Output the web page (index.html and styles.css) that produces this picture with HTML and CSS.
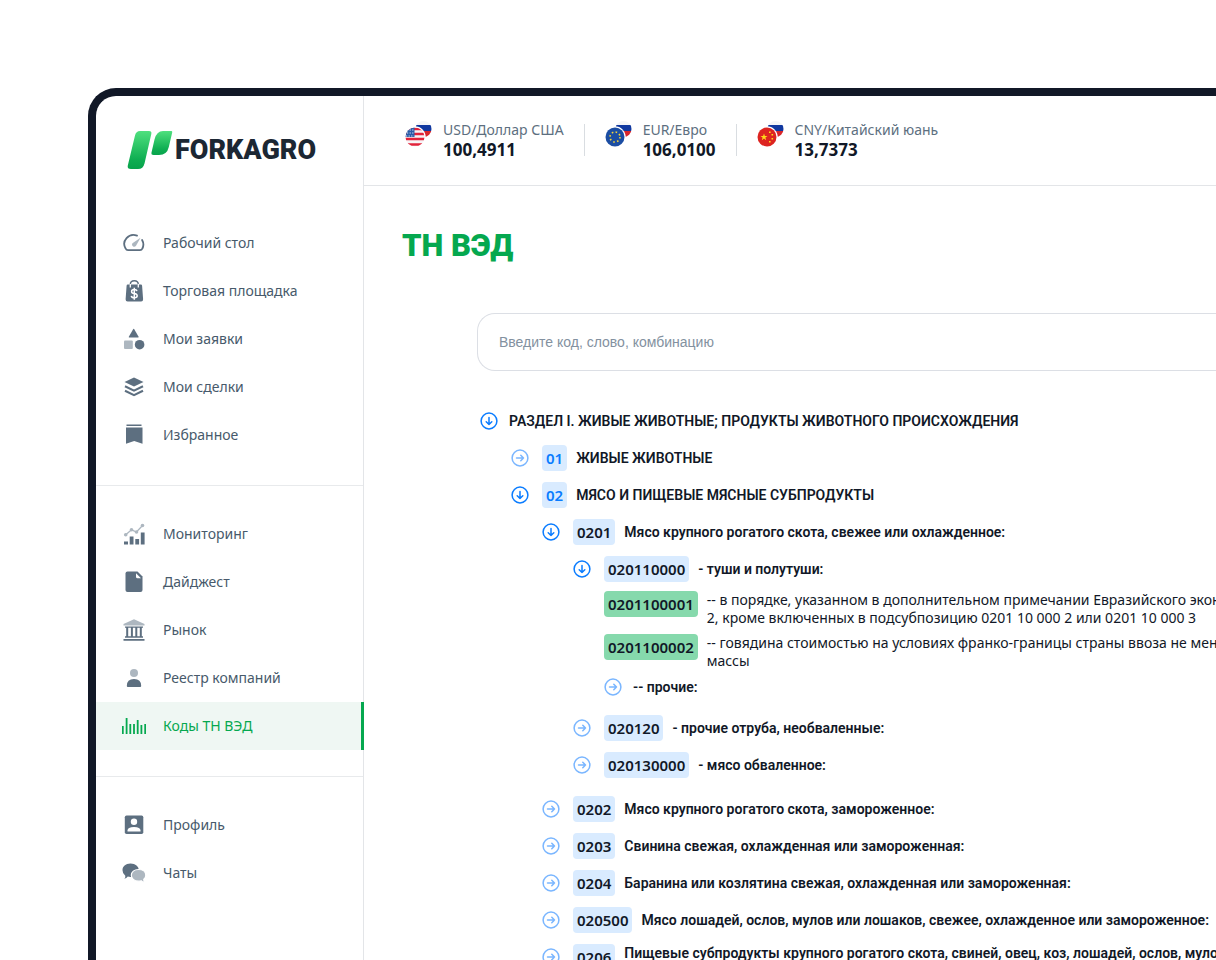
FILE: index.html
```html
<!DOCTYPE html>
<html lang="ru">
<head>
<meta charset="utf-8">
<title>ForkAgro — ТН ВЭД</title>
<link rel="stylesheet" href="styles.css">
</head>
<body>
<svg width="0" height="0" class="defs" aria-hidden="true">
  <defs>
    <linearGradient id="leaf" x1="0" y1="0" x2="0" y2="1">
      <stop offset="0" stop-color="#4fe07e"/><stop offset="0.75" stop-color="#0fae52"/><stop offset="1" stop-color="#08a34c"/>
    </linearGradient>
    <clipPath id="small-flag"><circle cx="19.500" cy="9" r="8"/></clipPath>
    <clipPath id="big-flag"><circle cx="11" cy="17" r="9.500"/></clipPath>
    <symbol id="ru" viewBox="0 0 28 28">
      <g clip-path="url(#small-flag)"><path fill="#f4f5f7" d="M11 0h17v5H11z"/><path fill="#1038a0" d="M11 5h17v6H11z"/><path fill="#d8262c" d="M11 11h17v7H11z"/></g>
      <circle cx="11" cy="17" r="10.700" fill="#fff"/>
    </symbol>
    <symbol id="down" viewBox="0 0 18 18"><g fill="none" stroke="currentColor" stroke-width="1.500" stroke-linecap="round" stroke-linejoin="round"><circle cx="9" cy="9" r="7.900"/><path d="M9 5.500v7M6.200 9.800L9 12.500l2.800-2.700"/></g></symbol>
    <symbol id="right" viewBox="0 0 18 18"><g fill="none" stroke="currentColor" stroke-width="1.500" stroke-linecap="round" stroke-linejoin="round"><circle cx="9" cy="9" r="7.900"/><path d="M5.500 9h7M9.800 6.200L12.500 9l-2.700 2.800"/></g></symbol>
  </defs>
</svg>
<div class="frame">
  <aside class="sidebar">
    <a class="logo" href="#">
      <svg width="46" height="40" viewBox="0 0 46 40" aria-hidden="true"><path fill="url(#leaf)" d="M13 1h9q3 0 2.300 3l-6.800 29.500Q16.200 39 11 39H4q-4 0-3.200-3.500L8 5.500Q9 1 13 1z"/><path fill="url(#leaf)" d="M36 1h8.500q1 0 .7 1.500l-3.400 14.500Q40 25 32 25h-5.500q-2.500 0-2-2.500l3-13Q29.500 1 36 1z"/></svg>
      <span>FORKAGRO</span>
    </a>
    <nav class="nav">
      <ul class="nav-group">
        <li><a class="nav-item" href="#"><svg class="icon" viewBox="0 0 24 24"><path d="M15 4.600A9.200 9 0 0 0 3.600 17.500q.7 1.700 2.400 1.700h12q1.700 0 2.400-1.700a9 9 0 0 0-.3-8.500" fill="none" stroke="currentColor" stroke-width="1.800" stroke-linecap="round"/><path class="pale" d="M18.500 6.800l-4.500 8a2.200 2.200 0 0 1-3.600-2.600z"/></svg>Рабочий стол</a></li>
        <li><a class="nav-item" href="#"><svg class="icon" viewBox="0 0 24 24"><path d="M8.300 8V5.500q0-3.800 4-3.800t4 3.800V8" fill="none" stroke="currentColor" stroke-width="1.400"/><path fill="currentColor" d="M5.700 5.500h13.200q1.100 0 1.200 1.300l1 13.500q.1 2.200-2 2.200H5.600q-2.100 0-2-2.200l1-13.500q.1-1.300 1.100-1.300z"/><path d="M15 12.200q-.4-1.700-2.800-1.700-2.600 0-2.600 1.900t2.700 2.100q2.900.4 2.900 2.300t-2.900 2q-2.600 0-3-2M12.300 8.700v12" fill="none" stroke="#fff" stroke-width="1.500"/><path d="M8.300 8.500V5M16.300 5v3.500" stroke="#fff" stroke-width="1.300"/></svg>Торговая площадка</a></li>
        <li><a class="nav-item" href="#"><svg class="icon" viewBox="0 0 24 24"><path fill="currentColor" d="M11.300 2q.4-.6.800 0l4.500 7.800q.3.700-.4.700h-9q-.7 0-.4-.7z"/><rect class="pale" x="2" y="13.500" width="8.800" height="8.500" rx="1"/><circle cx="17.600" cy="17.700" r="4.800" fill="currentColor"/></svg>Мои заявки</a></li>
        <li><a class="nav-item" href="#"><svg class="icon" viewBox="0 0 24 24"><path fill="currentColor" d="M12 2.500L21.500 7 12 11.500 2.500 7z"/><path d="M3 11.200l9 4.500 9-4.500M3 15.700l9 4.500 9-4.500" fill="none" stroke="currentColor" stroke-width="2.100"/></svg>Мои сделки</a></li>
        <li><a class="nav-item" href="#"><svg class="icon" viewBox="0 0 24 24"><path fill="currentColor" d="M4.500 1.500h15V3h-15zM4 4.500h16.500v16.300L12.200 18 4 20.800z"/></svg>Избранное</a></li>
      </ul>
      <ul class="nav-group">
        <li><a class="nav-item" href="#"><svg class="icon" viewBox="0 0 24 24"><path d="M4 12.500l5.500-4.700 5 2.200 6-6.500" fill="none" stroke="#adb7c0" stroke-width="1.300"/><g class="pale"><circle cx="3.700" cy="12.800" r="1.800"/><circle cx="9.500" cy="7.800" r="1.800"/><circle cx="14.500" cy="10" r="1.800"/><circle cx="20.500" cy="3.500" r="1.800"/></g><path fill="currentColor" d="M2 19.500h4v3H2zM7.700 14.500h3.800v8H7.700zM13.300 17h3.800v5.500h-3.800zM18.800 10.500h3.800v12h-3.800z"/></svg>Мониторинг</a></li>
        <li><a class="nav-item" href="#"><svg class="icon" viewBox="0 0 24 24"><path fill="currentColor" d="M5.500 1.500h10l5 5V20q0 2-2 2h-13q-2 0-2-2V3.500q0-2 2-2z"/><path fill="#fff" d="M14 3.300l5 5h-3.500q-1.500 0-1.500-1.500z"/></svg>Дайджест</a></li>
        <li><a class="nav-item" href="#"><svg class="icon" viewBox="0 0 24 24"><path class="pale" d="M12 1.200L22.500 6v1.500h-21V6z"/><path fill="currentColor" d="M3 8.500h18v1.300H3zM4.200 9h2v10h-2zM8.900 9h2v10h-2zM13.300 9h2v10h-2zM17.800 9h2v10h-2zM3 18.300h18v1.400H3zM1.500 21h21v1.700h-21z"/></svg>Рынок</a></li>
        <li><a class="nav-item" href="#"><svg class="icon" viewBox="0 0 24 24"><circle class="pale" cx="12" cy="7" r="4"/><path fill="currentColor" d="M4.800 20q0-7 7.200-7t7.200 7q0 1-1 1H5.800q-1 0-1-1z"/></svg>Реестр компаний</a></li>
        <li><a class="nav-item active" href="#" aria-current="page"><svg class="icon" viewBox="0 0 24 24"><path d="M.8 12v8M4.600 4v16M8.300 10v10M12 10v10M15.700 6v14M19.400 11v9M23.200 10v10" fill="none" stroke="currentColor" stroke-width="1.800"/></svg>Коды ТН ВЭД</a></li>
      </ul>
      <ul class="nav-group">
        <li><a class="nav-item" href="#"><svg class="icon" viewBox="0 0 24 24"><rect x="2.800" y="2.500" width="18.500" height="18.500" rx="1.700" fill="currentColor"/><circle cx="12" cy="8.700" r="3.200" fill="#fff"/><path fill="#fff" d="M5.500 18.500v-1q0-3.500 6.500-3.500t6.500 3.500v1z"/></svg>Профиль</a></li>
        <li><a class="nav-item" href="#"><svg class="icon" viewBox="0 0 24 24"><path fill="currentColor" d="M8.500 2.500c5 0 8.300 3 8.300 6.700s-3.300 6.800-8.300 6.800q-1.500 0-2.700-.4Q4.500 17.500 2.300 17.700q1.400-1.200 1-3Q.5 12.700.5 9.200c0-3.700 3-6.700 8-6.700z"/><path class="pale" stroke="#fff" stroke-width="1.200" d="M16.500 8.500c4.300 0 7.300 2.400 7.300 5.800q0 2.500-2 4-.2 1.600 1 3-2 0-3.500-1.500-1 .4-2.800.4c-4.300 0-7.200-2.500-7.200-5.900s2.900-5.800 7.200-5.800z"/></svg>Чаты</a></li>
      </ul>
    </nav>
  </aside>
  <div class="content">
    <header class="rates">
      <div class="rate"><svg width="28" height="28" viewBox="0 0 28 28" aria-hidden="true"><use href="#ru"/><g clip-path="url(#big-flag)"><path fill="#f7f4f6" d="M0 6h22v22H0z"/><path d="M0 9h22M0 14h22M0 19h22M0 24.500h22" stroke="#e2233b" stroke-width="2.500"/><path fill="#2a5ca8" d="M0 6h10.500v11H0z"/><path d="M3 10h7M3 13h7M2 16h8" stroke="#dce6f4" stroke-width="1.200" stroke-dasharray="1.200 1.400"/></g></svg><div class="rate-text"><span class="rate-name">USD/Доллар США</span><strong class="rate-value">100,4911</strong></div></div>
      <div class="rate"><svg width="28" height="28" viewBox="0 0 28 28" aria-hidden="true"><use href="#ru"/><circle cx="11" cy="17" r="9.500" fill="#1b4da3"/><circle cx="11" cy="17" r="5" fill="none" stroke="#f2d43b" stroke-width="1.600" stroke-dasharray="1.600 2.327"/></svg><div class="rate-text"><span class="rate-name">EUR/Евро</span><strong class="rate-value">106,0100</strong></div></div>
      <div class="rate"><svg width="28" height="28" viewBox="0 0 28 28" aria-hidden="true"><use href="#ru"/><circle cx="11" cy="17" r="9.500" fill="#dd2420"/><path fill="#ffd91a" d="M8 13.500l.9 2.500h2.600l-2.100 1.600.8 2.600L8 18.600l-2.200 1.600.8-2.600L4.500 16h2.600zM13 11.500h1.600v1.600H13zM15.500 14h1.600v1.600h-1.600zM15.500 18h1.600v1.600h-1.600zM13 21h1.600v1.600H13z"/></svg><div class="rate-text"><span class="rate-name">CNY/Китайский юань</span><strong class="rate-value">13,7373</strong></div></div>
    </header>
    <main class="main">
      <h1 class="title">ТН ВЭД</h1>
      <div class="catalog">
        <input class="search" type="text" aria-label="Поиск по кодам" placeholder="Введите код, слово, комбинацию">
        <ul class="tree">
          <li class="node">
            <div class="row section"><button class="toggle open" aria-label="Свернуть"><svg><use href="#down"/></svg></button><span class="label">РАЗДЕЛ I. ЖИВЫЕ ЖИВОТНЫЕ; ПРОДУКТЫ ЖИВОТНОГО ПРОИСХОЖДЕНИЯ</span></div>
            <ul class="branch">
              <li class="node"><div class="row"><button class="toggle" aria-label="Развернуть"><svg><use href="#right"/></svg></button><span class="code group">01</span><span class="label">ЖИВЫЕ ЖИВОТНЫЕ</span></div></li>
              <li class="node">
                <div class="row"><button class="toggle open" aria-label="Свернуть"><svg><use href="#down"/></svg></button><span class="code group">02</span><span class="label">МЯСО И ПИЩЕВЫЕ МЯСНЫЕ СУБПРОДУКТЫ</span></div>
                <ul class="branch">
                  <li class="node parent">
                    <div class="row"><button class="toggle open" aria-label="Свернуть"><svg><use href="#down"/></svg></button><span class="code">0201</span><span class="label">Мясо крупного рогатого скота, свежее или охлажденное:</span></div>
                    <ul class="branch">
                      <li class="node parent">
                        <div class="row"><button class="toggle open" aria-label="Свернуть"><svg><use href="#down"/></svg></button><span class="code">020110000</span><span class="label">- туши и полутуши:</span></div>
                        <ul class="branch leaves">
                          <li class="row tall"><span class="code final">0201100001</span><span class="text">-- в порядке, указанном в дополнительном примечании Евразийского экономического<br>2, кроме включенных в подсубпозицию 0201 10 000 2 или 0201 10 000 3</span></li>
                          <li class="row tall"><span class="code final">0201100002</span><span class="text">-- говядина стоимостью на условиях франко-границы страны ввоза не менее<br>массы</span></li>
                          <li class="row section compact"><button class="toggle" aria-label="Развернуть"><svg><use href="#right"/></svg></button><span class="label">-- прочие:</span></li>
                        </ul>
                      </li>
                      <li class="node"><div class="row"><button class="toggle" aria-label="Развернуть"><svg><use href="#right"/></svg></button><span class="code">020120</span><span class="label">- прочие отруба, необваленные:</span></div></li>
                      <li class="node"><div class="row"><button class="toggle" aria-label="Развернуть"><svg><use href="#right"/></svg></button><span class="code">020130000</span><span class="label">- мясо обваленное:</span></div></li>
                    </ul>
                  </li>
                  <li class="node"><div class="row"><button class="toggle" aria-label="Развернуть"><svg><use href="#right"/></svg></button><span class="code">0202</span><span class="label">Мясо крупного рогатого скота, замороженное:</span></div></li>
                  <li class="node"><div class="row"><button class="toggle" aria-label="Развернуть"><svg><use href="#right"/></svg></button><span class="code">0203</span><span class="label">Свинина свежая, охлажденная или замороженная:</span></div></li>
                  <li class="node"><div class="row"><button class="toggle" aria-label="Развернуть"><svg><use href="#right"/></svg></button><span class="code">0204</span><span class="label">Баранина или козлятина свежая, охлажденная или замороженная:</span></div></li>
                  <li class="node"><div class="row"><button class="toggle" aria-label="Развернуть"><svg><use href="#right"/></svg></button><span class="code">020500</span><span class="label">Мясо лошадей, ослов, мулов или лошаков, свежее, охлажденное или замороженное:</span></div></li>
                  <li class="node"><div class="row tall"><button class="toggle" aria-label="Развернуть"><svg><use href="#right"/></svg></button><span class="code">0206</span><span class="label">Пищевые субпродукты крупного рогатого скота, свиней, овец, коз, лошадей, ослов, мулов</span></div></li>
                </ul>
              </li>
            </ul>
          </li>
        </ul>
      </div>
    </main>
  </div>
</div>
</body>
</html>
```
FILE: styles.css
```css
* { box-sizing: border-box; }

html, body { height: 100%; }

body {
  margin: 0;
  padding: 88px 0 0 88px;
  overflow: hidden;
  background: #fff;
  color: #111827;
  font-family: "Noto Sans", "Open Sans", sans-serif;
  font-size: 14px;
  line-height: 18px;
}

ul { margin: 0; padding: 0; list-style: none; }

a { color: inherit; text-decoration: none; }

.defs { position: absolute; }

.frame {
  display: flex;
  height: 100%;
  border: solid #111827;
  border-width: 8px 0 0 8px;
  border-top-left-radius: 28px;
}

.sidebar {
  flex: none;
  width: 268px;
  border-right: 1px solid #e3e5e8;
}

.logo {
  display: flex;
  align-items: center;
  gap: 2px;
  padding: 34px 0 49px 31px;
  color: #1c2733;
  font-family: Roboto, sans-serif;
  font-size: 27px;
  font-weight: 900;
  line-height: 40px;
}

.nav-group { padding-bottom: 26px; }

.nav-group + .nav-group {
  padding-top: 24px;
  border-top: 1px solid #e8eaec;
}

.nav-item {
  display: flex;
  align-items: center;
  gap: 17px;
  height: 48px;
  padding-left: 26px;
  color: #475a6b;
}

.nav-item.active {
  border-right: 3px solid #05a84f;
  margin-right: -1px;
  background: #eff7f3;
  color: #05a84f;
}

.icon {
  flex: none;
  width: 24px;
  height: 24px;
  color: #5d6f80;
}

.active .icon { color: inherit; }

.pale { fill: #adb7c0; }

.content { flex: 1; min-width: 0; overflow: hidden; }

.rates {
  display: flex;
  padding: 24px 0 25px 40px;
  border-bottom: 1px solid #e3e5e8;
}

.rate { display: flex; gap: 11px; }

.rate + .rate {
  margin-left: 20px;
  padding-left: 20px;
  background: linear-gradient(#d9dde1, #d9dde1) 0 4px / 1px 32px no-repeat;
}

.rate-text {
  display: flex;
  flex-direction: column;
  white-space: nowrap;
}

.rate-name { color: #5d6f80; line-height: 20px; }

.rate-value { font-size: 17px; line-height: 20px; }

.main { padding: 40px 0 0 38px; }

.title {
  margin: 0 0 47px;
  color: #05a84f;
  font-family: Roboto, sans-serif;
  font-size: 31px;
  font-weight: 900;
  line-height: 40px;
}

.catalog { padding-left: 75px; }

.search {
  display: block;
  width: 100%;
  height: 58px;
  padding: 0 21px;
  border: 1px solid #dcdfe5;
  border-right: 0;
  border-radius: 18px 0 0 18px;
  background: #fff;
  font-family: "Liberation Sans", Arial, sans-serif;
  font-size: 14px;
}

.search::placeholder { color: #8391a0; opacity: 1; }

.tree { padding: 37px 0 0 3px; }

.branch {
  display: flex;
  flex-direction: column;
  gap: 11px;
  padding: 11px 0 0 31px;
}

.parent { padding-bottom: 7px; }

.row {
  display: flex;
  align-items: center;
  min-height: 26px;
  gap: 9px;
  white-space: nowrap;
}

.section { gap: 11px; }

.compact { min-height: 20px; }

.tall { align-items: flex-start; }

.leaves { gap: 7px; padding-top: 9px; }

.toggle {
  flex: none;
  width: 18px;
  height: 18px;
  margin-right: 4px;
  padding: 0;
  border: 0;
  background: none;
  color: #7ab6ff;
}

.section .toggle { margin-right: 0; }

.tall .toggle { margin-top: 4px; }

.toggle.open { color: #0a7cff; }

.toggle svg { display: block; width: 18px; height: 18px; }

.code {
  flex: none;
  padding: 4px;
  border-radius: 4px;
  background: #d9ebff;
  font-size: 15px;
  font-weight: 600;
}

.code.group { color: #0a7cff; }

.code.final { background: #86d9ac; }

.label { font-family: Roboto, sans-serif; font-weight: 600; }
```
